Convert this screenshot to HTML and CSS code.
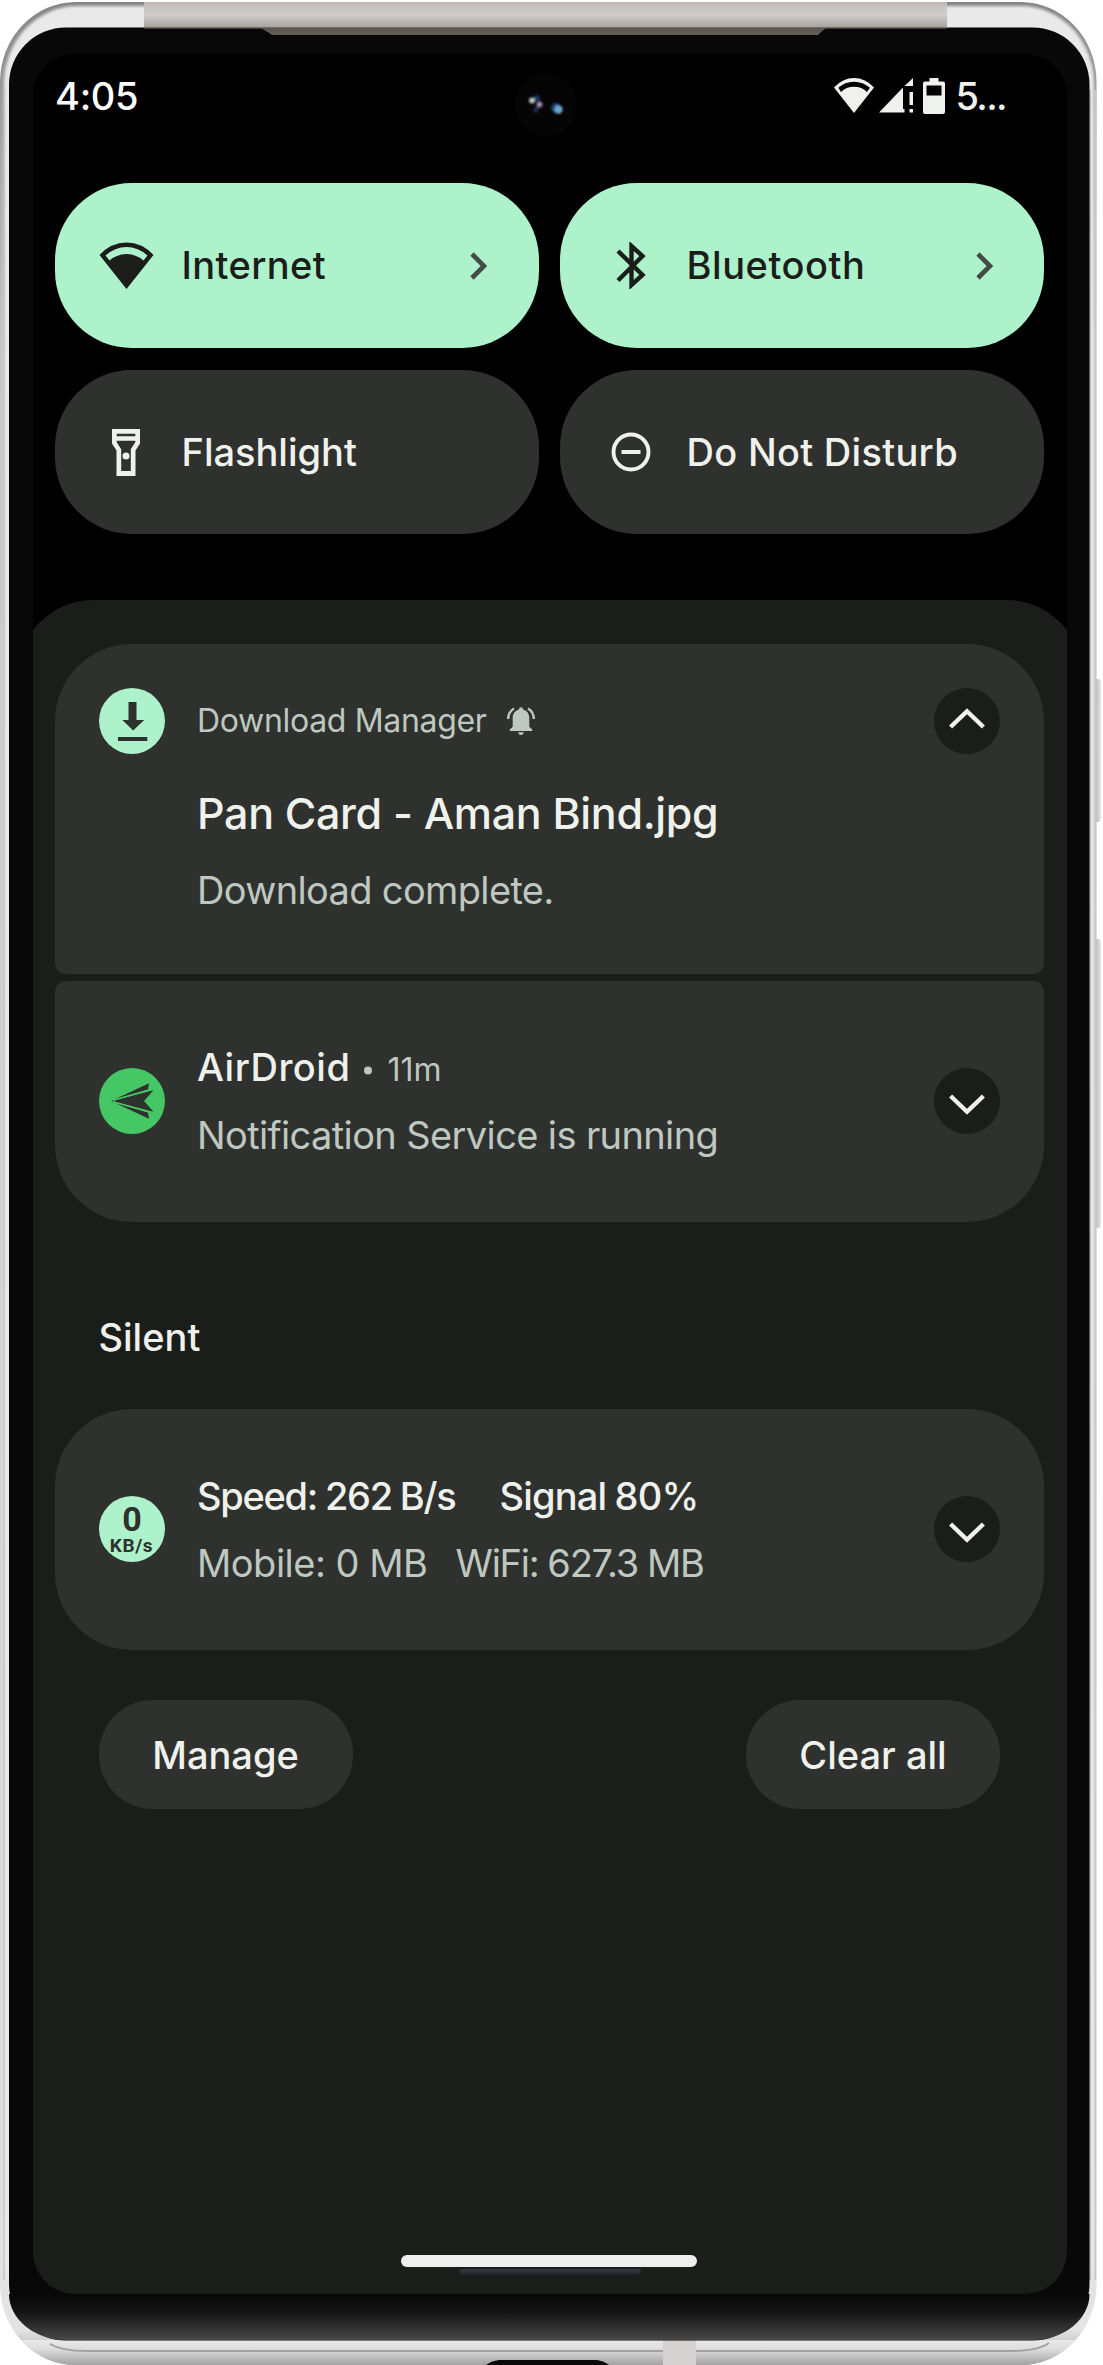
FILE: index.html
```html
<!DOCTYPE html>
<html lang="en">
<head>
<meta charset="utf-8">
<title>Notification shade</title>
<link rel="stylesheet" href="styles.css">
</head>
<body>
<div class="phone">
  <svg class="hardware" viewBox="0 0 1103 2365" aria-hidden="true">
    <defs>
      <linearGradient id="key" x1="0" x2="1" y1="0" y2="0"><stop offset="0" stop-color="#b2b2b2"/><stop offset="1" stop-color="#e8e8e8"/></linearGradient>
      <linearGradient id="left" x1="0" x2="0" y1="0" y2="1"><stop offset="0" stop-color="#838383"/><stop offset=".06" stop-color="#a6a6a6"/><stop offset=".15" stop-color="#c6c6c6"/><stop offset=".9" stop-color="#dcdcdc"/><stop offset=".985" stop-color="#e4e4e4"/><stop offset="1" stop-color="#a0a0a0"/></linearGradient>
      <linearGradient id="strip" x1="0" x2="0" y1="0" y2="1"><stop offset="0" stop-color="#c1bab6"/><stop offset=".5" stop-color="#cfcecc"/><stop offset=".95" stop-color="#aaa59f"/><stop offset="1" stop-color="#77736c"/></linearGradient>
      <linearGradient id="ear" x1="0" x2="0" y1="0" y2="1"><stop offset="0" stop-color="#5b554f"/><stop offset=".75" stop-color="#5f5b55"/><stop offset="1" stop-color="#7b7d76"/></linearGradient>
      <linearGradient id="chin" gradientUnits="userSpaceOnUse" x1="0" x2="0" y1="2294" y2="2340"><stop offset="0" stop-color="#070707"/><stop offset=".4" stop-color="#151515"/><stop offset="1" stop-color="#474747"/></linearGradient>
      <linearGradient id="foot" gradientUnits="userSpaceOnUse" x1="0" x2="0" y1="2340" y2="2365"><stop offset="0" stop-color="#e9e9e9"/><stop offset=".35" stop-color="#dedede"/><stop offset="1" stop-color="#a2a2a2"/></linearGradient>
      <filter id="soft" x="-5%" y="-5%" width="110%" height="110%"><feGaussianBlur stdDeviation="1.6"/></filter>
      <filter id="glow" x="-50%" y="-50%" width="200%" height="200%"><feGaussianBlur stdDeviation="1.2"/></filter>
      <clipPath id="body"><rect x="0" y="2" width="1096.5" height="2363" rx="76" ry="80"/></clipPath>
    </defs>
    <path d="M1095 679h4q2 1 2 5v133q0 4-2 5h-4zM1095 939h4q2 1 2 5v279q0 4-2 5h-4z" fill="url(#key)"/>
    <g clip-path="url(#body)">
      <rect y="2" width="1097" height="2363" fill="url(#left)"/>
      <rect x="4" y="6" width="1090" height="2330" rx="73" ry="78" fill="#e9e9e9" filter="url(#soft)"/>
      <path d="M0 2340h1103v25H0z" fill="url(#foot)"/>
      <path d="M4 90v2190" stroke="#b9b9b9"/>
      <path d="M1090 90v2190" stroke="#8f8f8f"/>
      <path d="M1095.500 90v2190" stroke="#c8c8c8" stroke-width="2"/>
      <path d="M50 2344q12 7 36 7h924q28 0 39-8" fill="none" stroke="#a1a1a1" stroke-width="2"/>
      <path d="M663 2340h33v25h-33z" fill="#d6d1d1"/>
      <path d="M486 2365q5-4 13-5h98q7 1 12 5z" fill="#0a0a0a"/>
    </g>
    <path d="M144 2h803v26H144z" fill="url(#strip)"/>
    <rect x="9" y="27.500" width="1080.500" height="2313" rx="57" ry="57" fill="#080808"/>
    <path d="M9 2294h1080.500a57 46 0 0 1-57 46H66a57 46 0 0 1-57-46z" fill="url(#chin)"/>
    <path d="M144 27h803v1.500H144z" fill="#716d67"/>
    <path d="M261 28h565l-8 6.700H272z" fill="url(#ear)"/>
  </svg>

  <main class="screen">
    <header class="status">
      <span class="time">4:05</span>
      <div class="indicators">
        <svg class="s-wifi" width="40" height="35" viewBox="0 0 40 35"><path fill="currentColor" fill-rule="evenodd" d="M20 35 0 9.500Q8.500 0 20 0t20 9.500zM4.300 9.700l2.700 4.300Q12 8.700 20 8.700T33 14l2.900-4.300Q29 3.700 20 3.700T4.300 9.700z"/></svg>
        <svg class="s-cell" width="34" height="35" viewBox="0 0 34 35"><path fill="currentColor" d="M34 0v8h-8.500zM24 9.500v21.500h1.500V34.500H0zM30.500 14h3.500v13h-3.500zM30.500 31h3.500v3.500h-3.500z"/></svg>
        <svg class="s-batt" width="22" height="36" viewBox="0 0 22 36"><path fill="currentColor" fill-rule="evenodd" d="M6.500 0h9v3.500H20a2 2 0 0 1 2 2V34a2 2 0 0 1-2 2H2a2 2 0 0 1-2-2V5.500a2 2 0 0 1 2-2h4.500zM3.500 7.500v10h15v-10z"/></svg>
        <span class="percent">5...</span>
      </div>
    </header>

    <section class="tiles">
      <button class="tile on">
        <span class="glyph"><svg width="55" height="47" viewBox="0 0 55 47"><path fill="currentColor" fill-rule="evenodd" d="M27.500 47 .5 13Q12 .5 27.500.5T54.500 13zM6.500 13.500l4 5Q18 12 27.500 12t17 6.500l4-5Q39 5 27.500 5T6.500 13.500z"/></svg></span>
        <span class="label t-internet">Internet</span>
        <svg class="go" width="18" height="28" viewBox="0 0 18 28"><path d="M2 2l12 12L2 26" fill="none" stroke="currentColor" stroke-width="4.600"/></svg>
      </button>
      <button class="tile on">
        <span class="glyph"><svg width="30" height="47" viewBox="0 0 30 47"><path d="M2 9l24.500 24L15.500 43V4l11 10L2 38.500" fill="none" stroke="currentColor" stroke-width="4.400"/></svg></span>
        <span class="label t-bluetooth">Bluetooth</span>
        <svg class="go" width="18" height="28" viewBox="0 0 18 28"><path d="M2 2l12 12L2 26" fill="none" stroke="currentColor" stroke-width="4.600"/></svg>
      </button>
      <button class="tile">
        <span class="glyph"><svg width="28" height="47" viewBox="0 0 28 47"><path fill="currentColor" fill-rule="evenodd" d="M0 0h28v14.500l-4.500 7V47h-19V21.500L0 14.500zM4.700 4.700v2.500h18.600V4.700zM4.700 11.700v1.500l4.500 7V42h9.600V20.200l4.500-7v-1.500z"/><circle cx="14" cy="27" r="3.500" fill="currentColor"/></svg></span>
        <span class="label">Flashlight</span>
      </button>
      <button class="tile">
        <span class="glyph"><svg width="40" height="40" viewBox="0 0 40 40"><circle cx="20" cy="20" r="17.500" fill="none" stroke="currentColor" stroke-width="3.900"/><path d="M10.500 20h19" stroke="currentColor" stroke-width="4"/></svg></span>
        <span class="label t-dnd">Do Not Disturb</span>
      </button>
    </section>

    <section class="shade">
      <article class="card first">
        <div class="head">
          <svg class="badge" viewBox="0 0 66 66"><circle cx="33" cy="33" r="33" fill="#adf2ca"/><path fill="#2f312e" d="M29.500 14h8v18h7.700L34.200 42.500 23.300 32h6.200zM19 49h29.300v4H19z"/></svg>
          <span class="app">Download Manager</span>
          <svg class="bell" width="28" height="28" viewBox="0 0 28 28"><path fill="currentColor" d="M14 .3c1.300 0 2 .8 2 2.200 4 1 6.300 4.400 6.300 8.500v8.700l2.900 2.800v1.500H2.800v-1.500l2.900-2.800V11c0-4.100 2.300-7.500 6.300-8.500 0-1.400.7-2.200 2-2.200zM11.300 25.300h5.400c0 1.600-1.200 2.700-2.700 2.700s-2.700-1.100-2.700-2.700z"/><path d="M1.200 12Q1.200 5 7 1.400M26.800 12Q26.800 5 21 1.400" fill="none" stroke="currentColor" stroke-width="2.400"/></svg>
          <span class="toggle"><svg width="36" height="21" viewBox="0 0 36 21"><path d="M1.600 19 18 3.200 34.400 19" fill="none" stroke="currentColor" stroke-width="4.400"/></svg></span>
        </div>
        <div class="title">Pan Card - Aman Bind.jpg</div>
        <div class="desc">Download complete.</div>
      </article>

      <article class="card row last">
        <svg class="badge" viewBox="0 0 66 66"><circle cx="33" cy="33" r="33" fill="#45c765"/><path fill="#2f312e" d="M12 33 54.500 22.300 45 33l9.500 10.700zM12 33 50 15.300 49 21.500zM12 33l38 17.700-1-6.200z"/><path d="M14 32.200 52 21.500M14 33.800l38 10.700" stroke="#45c765" stroke-width="1.500"/></svg>
        <div class="lines">
          <div class="line"><span class="t-air">AirDroid</span><i class="dot"></i><span class="ago">11m</span></div>
          <div class="line dim t-notif">Notification Service is running</div>
        </div>
        <span class="toggle"><svg width="36" height="21" viewBox="0 0 36 21"><path d="M1.600 2 18 17.800 34.400 2" fill="none" stroke="currentColor" stroke-width="4.400"/></svg></span>
      </article>

      <h2 class="group">Silent</h2>

      <article class="card row alone">
        <div class="badge meter"><b>0</b><small>KB/s</small></div>
        <div class="lines">
          <div class="line"><span class="t-speed">Speed: 262 B/s</span><span class="t-signal">Signal 80%</span></div>
          <div class="line dim"><span class="t-mobile">Mobile: 0 MB</span><span class="t-wifi">WiFi: 627.3 MB</span></div>
        </div>
        <span class="toggle"><svg width="36" height="21" viewBox="0 0 36 21"><path d="M1.600 2 18 17.800 34.400 2" fill="none" stroke="currentColor" stroke-width="4.400"/></svg></span>
      </article>

      <div class="actions">
        <button class="pill">Manage</button>
        <button class="pill">Clear all</button>
      </div>
    </section>
  </main>

  <svg class="camera" width="64" height="64" viewBox="0 0 64 64" aria-hidden="true">
    <circle cx="32" cy="32" r="31" fill="#050505"/>
    <g filter="url(#glow)"><circle cx="23" cy="25" r="3" fill="#17305f"/><circle cx="22" cy="37" r="3" fill="#14264d"/><circle cx="18" cy="27.500" r="3" fill="#b5c4c0"/><circle cx="25.500" cy="31.500" r="3" fill="#9b8db0"/><circle cx="42" cy="35" r="5" fill="#1c3d6e"/><circle cx="44.500" cy="36.500" r="4.200" fill="#6aa6cc"/></g>
  </svg>
  <div class="homebar"></div>
  <div class="slot"></div>
</div>
</body>
</html>
```
FILE: styles.css
```css
* { box-sizing: border-box; }
body { margin: 0; background: #fff; }
button { border: 0; margin: 0; font: inherit; color: inherit; text-align: left; }

.phone {
  position: relative;
  width: 1103px;
  height: 2365px;
  padding: 54px 36px 71px 32.500px;
  overflow: hidden;
  font-family: Inter, Roboto, "Liberation Sans", sans-serif;
  font-size: 38px;
  font-weight: 500;
  line-height: 46px;
  color: #eff1ec;
}
.hardware { position: absolute; inset: 0; width: 1103px; height: 2365px; }
.screen {
  position: relative;
  display: flex;
  flex-direction: column;
  width: 1034.500px;
  height: 2240px;
  border-radius: 42px;
  background: #000;
  overflow: hidden;
}

.status {
  display: flex;
  justify-content: space-between;
  align-items: flex-start;
  height: 129.300px;
  padding: 18.500px 61px 0 22.500px;
}
.time { color: #fff; letter-spacing: -.3px; }
.indicators { display: flex; align-items: center; }
.s-cell { margin-left: 4.500px; }
.s-batt { margin-left: 10.500px; }
.percent { width: 50.500px; margin-left: 10.500px; letter-spacing: -1.700px; white-space: nowrap; }

.tiles {
  display: grid;
  grid-template-columns: 483.500px 484px;
  grid-auto-rows: 164.500px;
  gap: 22px 21.500px;
  padding-left: 22.500px;
}
.tile {
  display: flex;
  align-items: center;
  padding: 0 50.500px 0 43px;
  border-radius: 77px;
  background: #2f312e;
}
.tile.on { background: #adf2ca; color: #1b1d1b; }
.glyph { display: flex; justify-content: center; width: 56px; }
.label { margin-left: 27.500px; white-space: nowrap; }
.on .label { margin-bottom: 1px; }
.go { margin-left: auto; color: #444b46; }
.t-internet { letter-spacing: .4px; }
.t-bluetooth { letter-spacing: .55px; }
.t-dnd { letter-spacing: .3px; }

.shade {
  flex: 1;
  margin: 65.500px -16px 0;
  padding: 44px 39px 0 38.500px;
  border-radius: 77px 77px 0 0;
  background: #1b1d1b;
}
.card { padding: 0 44px 0 43.500px; background: #2f312e; }
.first { height: 330.500px; padding-top: 44px; border-radius: 77px 77px 11px 11px; }
.last { border-radius: 11px 11px 77px 77px; margin-top: 6.500px; }
.alone { border-radius: 77px; }
.row { display: flex; align-items: center; height: 241px; }
.head { display: flex; align-items: center; height: 66px; }
.badge { flex: none; width: 66px; height: 66px; }
.app { margin-left: 32.500px; font-size: 32px; font-weight: 400; letter-spacing: -.32px; color: #bec8c0; }
.bell { margin-left: 20.500px; color: #bec8c0; }
.toggle {
  display: flex;
  align-items: center;
  justify-content: center;
  width: 66px;
  height: 66px;
  margin-left: auto;
  border-radius: 50%;
  background: #1b1d1b;
}
.first .toggle svg { margin-bottom: 5px; }
.row .toggle svg { margin-top: 6px; }
.title { margin: 32px 0 0 98.500px; font-size: 43px; line-height: 54px; letter-spacing: -.33px; }
.desc { margin: 27px 0 0 98.500px; font-weight: 400; letter-spacing: -.65px; color: #bec8c0; }

.lines { margin-left: 32.500px; padding-top: 1px; }
.line { display: flex; align-items: baseline; line-height: 67px; white-space: nowrap; }
.dim { font-weight: 400; color: #bec8c0; }
.dot { width: 8px; height: 8px; margin: 0 15px 0 14px; border-radius: 50%; background: #bec8c0; transform: translateY(-6.500px); }
.ago { font-size: 32px; font-weight: 400; color: #bec8c0; }
.group { margin: 0; padding: 92px 0 49px 43.500px; font-size: 38px; font-weight: 500; line-height: 46px; }
.t-air { letter-spacing: .5px; }
.t-notif { margin-bottom: 1px; line-height: 65px; letter-spacing: -.62px; }
.t-speed { letter-spacing: -1.300px; word-spacing: -.800px; }
.t-signal { margin-left: 44px; letter-spacing: -.800px; word-spacing: -1px; }
.t-mobile { letter-spacing: -.5px; }
.t-wifi { margin-left: 28px; letter-spacing: -1.250px; word-spacing: -.5px; }

.meter {
  display: flex;
  flex-direction: column;
  align-items: center;
  padding-top: 6px;
  border-radius: 50%;
  background: #adf2ca;
  color: #2f312e;
  font-family: Roboto, "Liberation Sans", sans-serif;
}
.meter b { font-size: 34px; line-height: 35px; letter-spacing: -1px; }
.meter small { font-size: 19px; font-weight: 700; line-height: 18px; letter-spacing: .6px; }

.actions { display: flex; justify-content: space-between; padding: 50px 44px 0 43.500px; }
.pill { width: 254px; height: 109.500px; padding: 0; border-radius: 54px; background: #2f312e; text-align: center; }

.camera { position: absolute; left: 513.500px; top: 72.500px; }
.homebar { position: absolute; left: 401px; top: 2255px; width: 296px; height: 12px; border-radius: 6px; background: #eee; }
.slot { position: absolute; left: 459px; top: 2269px; width: 182px; height: 6px; border-radius: 3px; background: linear-gradient(#393940, #22242a); }
```
